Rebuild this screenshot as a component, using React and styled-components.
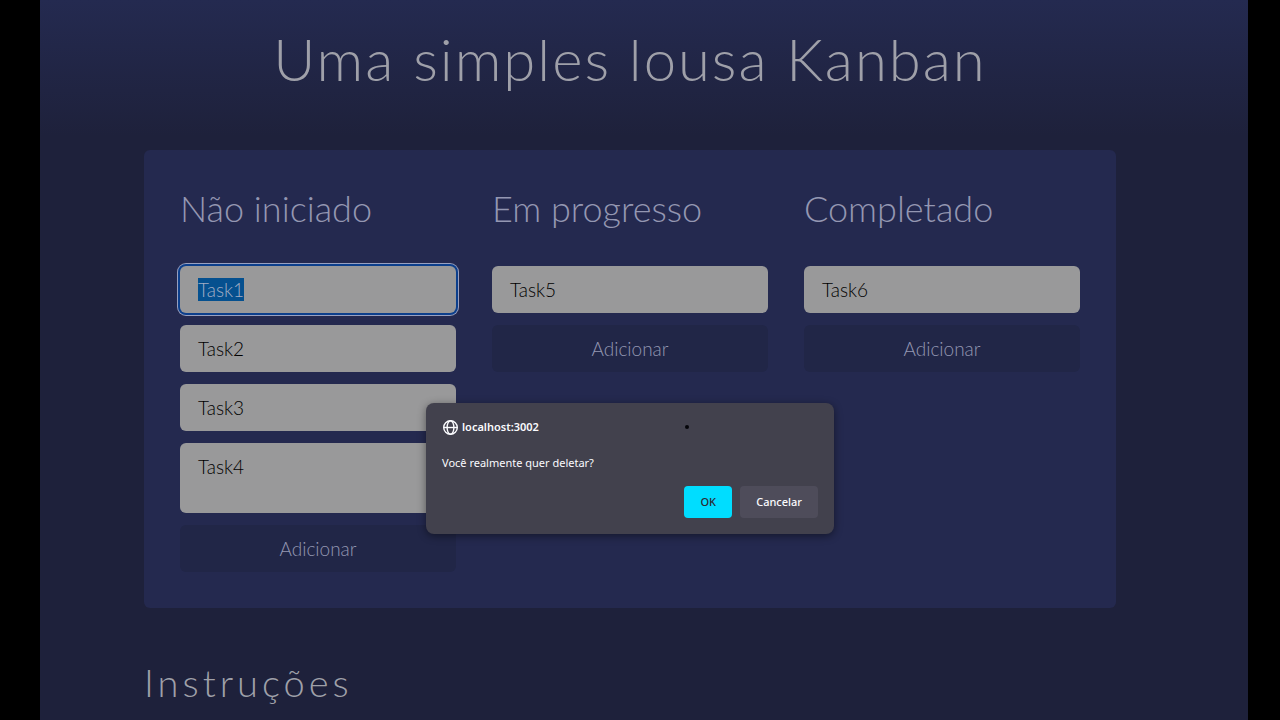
import React, { useEffect, useRef } from "react";
import styled, { createGlobalStyle } from "styled-components";

const Global = createGlobalStyle`
  *, *::before, *::after { box-sizing: border-box; }
  body {
    margin: 0;
    background: #000;
    overflow: hidden;
  }
  #root { height: 100vh; }
`;

const Frame = styled.div`
  min-height: 100vh;
  padding: 0 32px 0 40px;
  font-family: Lato, "Liberation Sans", sans-serif;
  font-weight: 300;
  color: #9fa0a9;
`;

const Page = styled.div`
  position: relative;
  min-height: 100vh;
  padding-right: 28px;
  background: #1e213b linear-gradient(#242a50, #1e213b) top / 100% 136px no-repeat;
`;

const Content = styled.div`
  max-width: 972px;
  margin: 0 auto;
`;

const Title = styled.h1`
  margin: 0;
  padding: 23px 0 55px;
  font-size: 58px;
  line-height: 72px;
  font-weight: 300;
  letter-spacing: 2px;
  text-align: center;
`;

const Board = styled.main`
  display: grid;
  grid-template-columns: repeat(3, 1fr);
  gap: 36px;
  align-items: start;
  padding: 36px;
  border-radius: 6px;
  background: #24294f;
`;

const Column = styled.section`
  display: flex;
  flex-direction: column;
  gap: 12px;
`;

const ColumnTitle = styled.h2`
  margin: 0 0 24px;
  font-size: 36px;
  line-height: 44px;
  font-weight: 300;
  color: #9497b2;
`;

const Task = styled.textarea`
  display: block;
  width: 100%;
  padding: 12px 18px;
  border: 0;
  border-radius: 6px;
  outline: none;
  resize: none;
  overflow: hidden;
  background: #99999a;
  color: #000;
  font: inherit;
  font-size: 19px;
  line-height: 23px;

  &:focus {
    box-shadow: 0 0 0 2px #0c3f8c, 0 0 0 3px #98a0c0;
  }
  &::selection {
    background: #05508f;
    color: #a3adc4;
  }
`;

const AddButton = styled.button`
  padding: 12px;
  border: 0;
  border-radius: 6px;
  background: #212647;
  color: #9497b2;
  font: inherit;
  font-size: 19px;
  line-height: 23px;
`;

const Instructions = styled.h2`
  margin: 0;
  padding-top: 50px;
  font-size: 38px;
  line-height: 48px;
  font-weight: 300;
  letter-spacing: 4px;
`;

const DialogLayer = styled.div`
  position: absolute;
  top: 403px;
  left: 0;
  right: 28px;
  display: flex;
  justify-content: center;
`;

const Dialog = styled.div`
  position: relative;
  display: flex;
  flex-direction: column;
  width: 408px;
  padding: 16px;
  border-radius: 8px;
  background: #42414d;
  box-shadow: 0 2px 8px rgba(0, 0, 0, 0.45);
  color: #fbfbfe;
  font-family: "Noto Sans", "Open Sans", sans-serif;
  font-size: 11px;
  line-height: 16px;
  font-weight: 400;
`;

const Origin = styled.div`
  display: flex;
  align-items: center;
  gap: 4px;
  font-weight: 600;
`;

const Message = styled.p`
  margin: 20px 0 15px;
`;

const Actions = styled.div`
  display: flex;
  justify-content: flex-end;
  gap: 8px;
`;

const DialogButton = styled.button`
  min-width: 48px;
  height: 32px;
  padding: 0 16px;
  border: 0;
  border-radius: 4px;
  background: ${(p) => (p.$primary ? "#00ddff" : "#4e4c5a")};
  color: ${(p) => (p.$primary ? "#2b2a33" : "#fbfbfe")};
  font: inherit;
  font-weight: 500;
`;

const Pointer = styled.span`
  position: absolute;
  top: 22px;
  left: 259px;
  width: 4px;
  height: 4px;
  border-radius: 50%;
  background: #05050a;
`;

const columns = [
  {
    title: "Não iniciado",
    tasks: [
      { text: "Task1", selected: true },
      { text: "Task2" },
      { text: "Task3" },
      { text: "Task4", rows: 2 },
    ],
  },
  { title: "Em progresso", tasks: [{ text: "Task5" }] },
  { title: "Completado", tasks: [{ text: "Task6" }] },
];

function TaskField({ text, rows = 1, selected }) {
  const ref = useRef(null);
  useEffect(() => {
    if (selected) {
      ref.current.focus({ preventScroll: true });
      ref.current.select();
    }
  }, [selected]);
  return <Task ref={ref} rows={rows} defaultValue={text} aria-label={text} spellCheck={false} />;
}

function Globe() {
  return (
    <svg width="16" height="16" viewBox="0 0 16 16" fill="none" stroke="currentColor" strokeWidth="1.4" aria-hidden="true">
      <circle cx="8.5" cy="8.5" r="6.8" />
      <ellipse cx="8.5" cy="8.5" rx="3.4" ry="6.8" />
      <path d="M1.7 8.5h13.6" />
    </svg>
  );
}

export default function App() {
  return (
    <Frame>
      <Global />
      <Page>
        <Content>
          <Title>Uma simples lousa Kanban</Title>
          <Board>
            {columns.map((column) => (
              <Column key={column.title}>
                <ColumnTitle>{column.title}</ColumnTitle>
                {column.tasks.map((task) => (
                  <TaskField key={task.text} {...task} />
                ))}
                <AddButton type="button">Adicionar</AddButton>
              </Column>
            ))}
          </Board>
          <Instructions>Instruções</Instructions>
        </Content>
        <DialogLayer>
          <Dialog role="alertdialog" aria-labelledby="origin" aria-describedby="message">
            <Origin id="origin">
              <Globe />
              localhost:3002
            </Origin>
            <Message id="message">Você realmente quer deletar?</Message>
            <Actions>
              <DialogButton type="button" $primary>OK</DialogButton>
              <DialogButton type="button">Cancelar</DialogButton>
            </Actions>
            <Pointer />
          </Dialog>
        </DialogLayer>
      </Page>
    </Frame>
  );
}
